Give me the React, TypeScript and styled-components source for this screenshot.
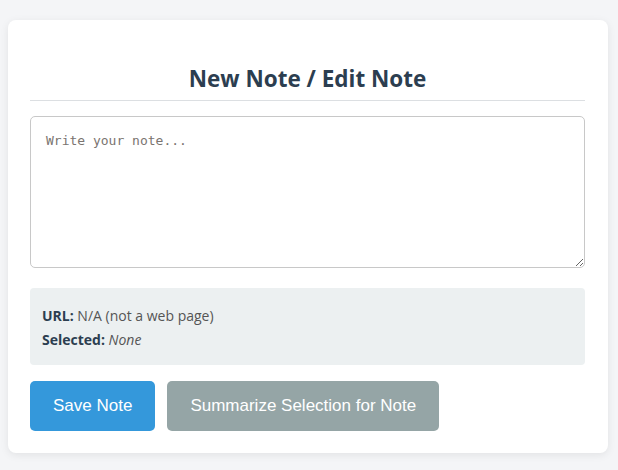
import React from "react";
import styled, { createGlobalStyle } from "styled-components";

const Global = createGlobalStyle`
  html, body { margin: 0; padding: 0; background: #f4f5f7; }
  body { font-family: "Open Sans", "Noto Sans", sans-serif; }
`;

const Page = styled.div`
  padding: 20px 10px 16px 8px;
`;

const Card = styled.div`
  background: #fff;
  border-radius: 8px;
  box-shadow: 0 2px 8px rgba(0, 0, 0, 0.08);
  padding: 22px 23px 22px 22px;
  display: flex;
  flex-direction: column;
`;

const Title = styled.h2`
  margin: 22px 0 15px;
  padding-bottom: 6px;
  border-bottom: 1px solid #dcdfe2;
  text-align: center;
  font-family: "Open Sans", "Noto Sans", sans-serif;
  font-weight: 700;
  font-size: 22.5px;
  line-height: 30px;
  color: #2c3e50;
`;

const NoteArea = styled.textarea`
  box-sizing: border-box;
  width: 100%;
  height: 152px;
  padding: 15px 15px 14px;
  border: 1px solid #c8c8c8;
  border-radius: 5px;
  font-family: "DejaVu Sans Mono", "Liberation Mono", monospace;
  font-size: 13px;
  line-height: 18px;
  color: #333;
  resize: vertical;
  outline: none;
  &::placeholder { color: #7a7470; }
`;

const Info = styled.div`
  margin-top: 20px;
  background: #ecf0f1;
  border-radius: 4px;
  padding: 16px 12px 13px;
  font-family: "Open Sans", "Noto Sans", sans-serif;
  font-size: 14px;
  color: #555;
`;

const InfoRow = styled.div`
  line-height: 24px;
  strong { color: #2c3e50; font-weight: 700; }
  em { font-style: italic; }
`;

const Actions = styled.div`
  display: flex;
  gap: 12px;
  margin-top: 16px;
`;

const Button = styled.button<{ $variant: "primary" | "secondary" }>`
  height: 50px;
  padding: 0 23px;
  border: none;
  border-radius: 5px;
  background: ${(p) => (p.$variant === "primary" ? "#3498db" : "#95a5a6")};
  color: #fff;
  font-family: "Liberation Sans", Arial, sans-serif;
  font-size: 17px;
  cursor: pointer;
`;

export default function App() {
  return (
    <>
      <Global />
      <Page>
        <Card>
          <Title>New Note / Edit Note</Title>
          <NoteArea placeholder="Write your note..." />
          <Info>
            <InfoRow>
              <strong>URL:</strong> N/A (not a web page)
            </InfoRow>
            <InfoRow>
              <strong>Selected:</strong> <em>None</em>
            </InfoRow>
          </Info>
          <Actions>
            <Button $variant="primary">Save Note</Button>
            <Button $variant="secondary">Summarize Selection for Note</Button>
          </Actions>
        </Card>
      </Page>
    </>
  );
}
